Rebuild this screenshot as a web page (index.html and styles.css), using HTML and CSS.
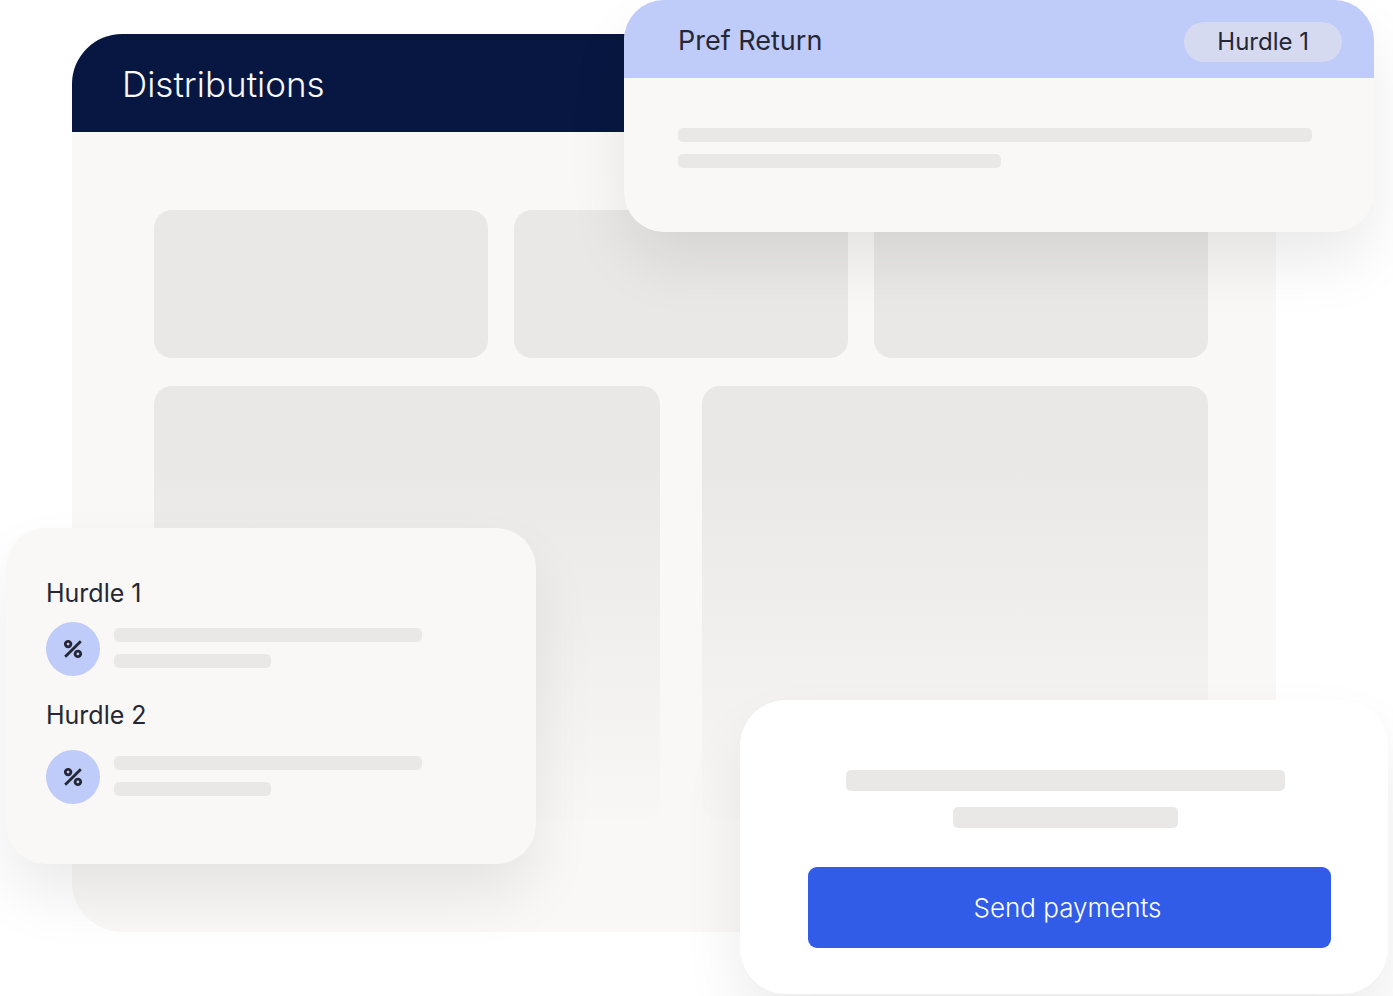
FILE: index.html
```html
<!DOCTYPE html>
<html lang="en">
<head>
<meta charset="utf-8">
<meta name="viewport" content="width=device-width, initial-scale=1">
<title>Distributions</title>
<link rel="stylesheet" href="styles.css">
</head>
<body>
<main class="stage">
  <section class="panel">
    <header class="panel-header"><h1 class="panel-title">Distributions</h1></header>
    <div class="panel-body">
      <div class="tiles tiles-three">
        <div class="tile"></div>
        <div class="tile"></div>
        <div class="tile"></div>
      </div>
      <div class="tiles tiles-two">
        <div class="tile tile-fade"></div>
        <div class="tile tile-fade"></div>
      </div>
    </div>
  </section>

  <section class="card pref">
    <header class="pref-header">
      <h2 class="pref-title">Pref Return</h2>
      <span class="pill">Hurdle 1</span>
    </header>
    <div class="pref-body">
      <div class="bar"></div>
      <div class="bar bar-half"></div>
    </div>
  </section>

  <section class="card hurdles">
    <div class="hurdle">
      <h3 class="hurdle-title">Hurdle 1</h3>
      <div class="hurdle-row">
        <span class="badge">
          <svg class="badge-icon" viewBox="0 0 18 18" aria-hidden="true"><path d="M1.2 16.8 16.8 1.2"/><circle cx="4.1" cy="4.1" r="2.8"/><circle cx="13.9" cy="13.9" r="2.8"/></svg>
        </span>
        <div class="bars">
          <div class="bar"></div>
          <div class="bar bar-half"></div>
        </div>
      </div>
    </div>
    <div class="hurdle hurdle-second">
      <h3 class="hurdle-title">Hurdle 2</h3>
      <div class="hurdle-row">
        <span class="badge">
          <svg class="badge-icon" viewBox="0 0 18 18" aria-hidden="true"><path d="M1.2 16.8 16.8 1.2"/><circle cx="4.1" cy="4.1" r="2.8"/><circle cx="13.9" cy="13.9" r="2.8"/></svg>
        </span>
        <div class="bars">
          <div class="bar"></div>
          <div class="bar bar-half"></div>
        </div>
      </div>
    </div>
  </section>

  <section class="card payment">
    <div class="payment-lines">
      <div class="bar bar-tall"></div>
      <div class="bar bar-tall bar-center"></div>
    </div>
    <button class="send" type="button">Send payments</button>
  </section>
</main>
</body>
</html>
```

FILE: styles.css
```css
* {
  box-sizing: border-box;
}

body {
  margin: 0;
  background: #fff;
  color: #252735;
  font-family: Inter, "Liberation Sans", sans-serif;
}

h1, h2, h3 {
  margin: 0;
  font-weight: 400;
}

.stage {
  position: relative;
  overflow: hidden;
  padding: 34px 117px 64px 72px;
}

.panel {
  overflow: hidden;
  border-radius: 50px;
  background: #f9f8f6;
}

.panel-header {
  padding: 28px 50px 26px;
  background: #071741;
}

.panel-title {
  color: #f9f8f6;
  font-size: 35px;
  font-weight: 300;
  line-height: 44px;
}

.panel-body {
  display: grid;
  gap: 28px;
  padding: 78px 68px 112px 82px;
}

.tiles {
  display: grid;
}

.tiles-three {
  grid-template-columns: repeat(3, 1fr);
  gap: 26px;
}

.tiles-two {
  grid-template-columns: repeat(2, 1fr);
  gap: 42px;
}

.tile {
  height: 148px;
  border-radius: 18px;
  background: #e9e8e6;
}

.tile-fade {
  height: 434px;
  background: linear-gradient(#e9e8e6 17%, #f8f7f5);
}

.card {
  position: absolute;
  border-radius: 40px;
  background: #f9f8f6;
  box-shadow: 0 32px 64px -4px rgba(0, 0, 0, 0.09);
}

.bar {
  height: 14px;
  border-radius: 5px;
  background: #e9e8e6;
}

.bar-half {
  width: 51%;
}

.pref {
  top: 0;
  left: 624px;
  right: 19px;
}

.pref-header {
  display: flex;
  align-items: flex-start;
  justify-content: space-between;
  padding: 22px 32px 16px 54px;
  border-radius: 40px 40px 0 0;
  background: #bfcbf8;
}

.pref-title {
  font-size: 27px;
  line-height: 38px;
}

.pill {
  padding: 0 33px;
  border-radius: 20px;
  background: #d5daf0;
  font-size: 24px;
  line-height: 40px;
}

.pref-body {
  display: grid;
  gap: 12px;
  padding: 50px 62px 64px 54px;
}

.hurdles {
  top: 528px;
  left: 6px;
  width: 530px;
  padding: 50px 114px 60px 40px;
}

.hurdle-title {
  font-size: 25px;
  line-height: 30px;
}

.hurdle-row {
  display: flex;
  align-items: flex-start;
  gap: 14px;
  margin-top: 14px;
}

.hurdle-second {
  margin-top: 24px;
}

.hurdle-second .hurdle-row {
  margin-top: 20px;
}

.badge {
  display: grid;
  place-items: center;
  width: 54px;
  height: 54px;
  border-radius: 50%;
  background: #bfcbf8;
}

.badge-icon {
  width: 18px;
  height: 18px;
  overflow: visible;
  fill: none;
  stroke: #252735;
  stroke-width: 2.8;
}

.bars {
  display: grid;
  flex: 1;
  gap: 12px;
  padding-top: 6px;
}

.payment {
  top: 700px;
  right: 5px;
  width: 648px;
  padding: 70px 57px 46px 68px;
  border-radius: 46px;
  background: #fff;
}

.payment-lines {
  display: grid;
  gap: 16px;
  padding: 0 46px 0 38px;
}

.bar-tall {
  height: 21px;
}

.bar-center {
  width: 225px;
  margin: 0 auto;
}

.send {
  display: block;
  width: 100%;
  margin-top: 39px;
  padding: 20px 28px 20px 24px;
  border: 0;
  border-radius: 9px;
  background: #305ce8;
  color: #fff;
  font: 300 26px/41px Inter, "Liberation Sans", sans-serif;
}
```
